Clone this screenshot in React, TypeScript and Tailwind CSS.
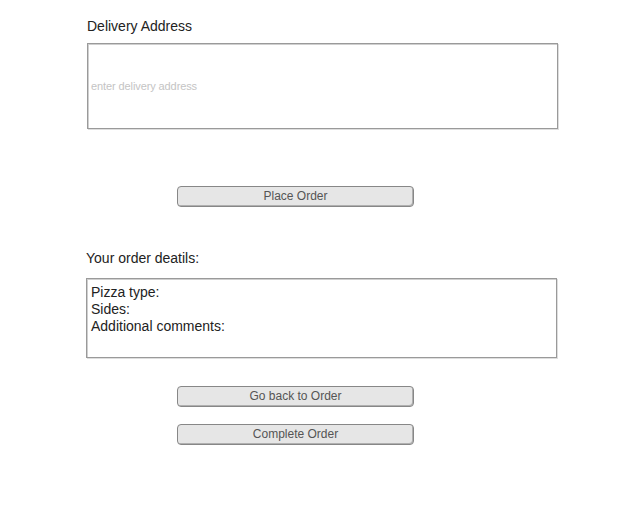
import React from 'react'

const font = "font-['Liberation_Sans',Arial,sans-serif]"

function GreyButton({ label, className = '' }: { label: string; className?: string }) {
    return (
        <button
            type="button"
            className={`ml-[90px] w-[237px] h-[21px] rounded-[4px] border border-[#878787] bg-[#e6e6e6] shadow-[inset_-1px_-1px_0_#b0b0b0] text-[12px] leading-[19px] text-[#555] text-center ${className}`}
        >
            {label}
        </button>
    )
}

export default function App() {
    return (
        <div className={`w-[631px] h-[517px] bg-white text-[#222] ${font}`}>
            <div className="flex flex-col items-start pl-[87px] pt-[18px]">
                {/* delivery address */}
                <p className="text-[14px] leading-[17px]">Delivery Address</p>
                <div className="mt-[8px] w-[471px] h-[86px] border border-[#9a9a9a] shadow-[inset_1px_1px_0_#cfcfcf,1px_1px_0_#dedede] flex items-center px-[3px]">
                    <span className="text-[11px] text-[#c4c4c4] tracking-[-0.1px]">enter delivery address</span>
                </div>

                <GreyButton label="Place Order" className="mt-[57px]" />

                {/* order summary */}
                <p className="-ml-[1px] mt-[43px] text-[14px] leading-[17px]">Your order deatils:</p>
                <div className="-ml-[1px] mt-[11px] w-[471px] h-[80px] border border-[#9a9a9a] shadow-[inset_1px_1px_0_#cfcfcf,1px_1px_0_#dedede] px-[4px] pt-[5px] text-[14px] leading-[17px]">
                    <div>Pizza type:</div>
                    <div>Sides:</div>
                    <div>Additional comments:</div>
                </div>

                <GreyButton label="Go back to Order" className="mt-[28px]" />
                <GreyButton label="Complete Order" className="mt-[17px]" />
            </div>
        </div>
    )
}
